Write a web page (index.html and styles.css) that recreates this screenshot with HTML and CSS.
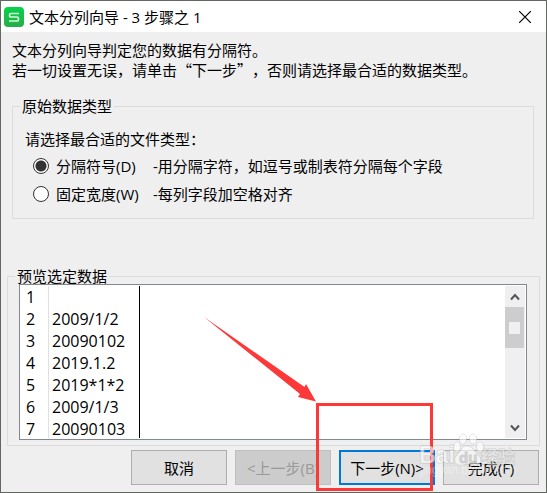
FILE: index.html
```html
<!DOCTYPE html>
<html lang="zh-CN">
<head>
<meta charset="utf-8">
<title>文本分列向导</title>
<link rel="stylesheet" href="styles.css">
</head>
<body>
<main class="dialog">
  <header class="titlebar">
    <svg class="logo" viewBox="0 0 20 20" aria-hidden="true">
      <defs><linearGradient id="g" x1="0" y1="0" x2="0" y2="1"><stop offset="0" stop-color="#05d34a"/><stop offset="1" stop-color="#27ad48"/></linearGradient></defs>
      <rect width="20" height="20" rx="4" fill="url(#g)"/>
      <path d="M15 6.500H7Q5.500 6.500 5.500 8Q5.500 10 7 10H13Q14.500 10 14.500 12Q14.500 14 13 14H5" fill="none" stroke="#d4f8dc" stroke-width="1.700"/>
    </svg>
    <h1 class="title">文本分列向导 - 3 步骤之 1</h1>
    <button class="close" type="button" aria-label="关闭">
      <svg viewBox="0 0 12 12" width="12" height="12"><path d="M0 0L12 12M12 0L0 12" stroke="#000" stroke-width="1.200"/></svg>
    </button>
  </header>

  <div class="intro">
    <p>文本分列向导判定您的数据有分隔符。</p>
    <p>若一切设置无误，请单击“下一步”，否则请选择最合适的数据类型。</p>
  </div>

  <fieldset class="group source">
    <legend>原始数据类型</legend>
    <p class="prompt">请选择最合适的文件类型：</p>
    <label class="option"><input type="radio" name="kind" checked><span>分隔符号(D)</span><span>-用分隔字符，如逗号或制表符分隔每个字段</span></label>
    <label class="option"><input type="radio" name="kind"><span>固定宽度(W)</span><span>-每列字段加空格对齐</span></label>
  </fieldset>

  <fieldset class="group preview">
    <legend>预览选定数据</legend>
    <div class="list">
      <div class="rows">
        <table>
          <tbody>
            <tr><th scope="row">1</th><td></td></tr>
            <tr><th scope="row">2</th><td>2009/1/2</td></tr>
            <tr><th scope="row">3</th><td>20090102</td></tr>
            <tr><th scope="row">4</th><td>2019.1.2</td></tr>
            <tr><th scope="row">5</th><td>2019*1*2</td></tr>
            <tr><th scope="row">6</th><td>2009/1/3</td></tr>
            <tr><th scope="row">7</th><td>20090103</td></tr>
          </tbody>
        </table>
      </div>
      <div class="scrollbar">
        <button class="arrow" type="button" aria-label="向上滚动"><svg viewBox="0 0 10 8" width="10" height="8"><path d="M1 6.500L5 2L9 6.500" fill="none" stroke="#555" stroke-width="2"/></svg></button>
        <div class="thumb"><span class="grip"></span></div>
        <button class="arrow down" type="button" aria-label="向下滚动"><svg viewBox="0 0 10 8" width="10" height="8"><path d="M1 1.500L5 6L9 1.500" fill="none" stroke="#555" stroke-width="2"/></svg></button>
      </div>
    </div>
  </fieldset>

  <footer class="actions">
    <button class="btn" type="button">取消</button>
    <button class="btn" type="button" disabled>&lt;上一步(B)</button>
    <button class="btn primary" type="button">下一步(N)&gt;</button>
    <button class="btn" type="button">完成(F)</button>
    <svg class="callout" viewBox="0 0 346 180" width="346" height="180" aria-hidden="true">
      <path d="M4 5L104.500 75L106 72L116 89.500L98 85L100 82Z" fill="#fd3838"/>
      <rect x="117.500" y="92.500" width="114" height="85" fill="none" stroke="#fd3838" stroke-width="3"/>
    </svg>
    <svg class="watermark" viewBox="0 0 100 50" width="100" height="50" aria-hidden="true">
      <g class="mark">
        <text class="brand" x="-1" y="31">Bai</text>
        <ellipse cx="37" cy="15" rx="3.500" ry="5"/>
        <ellipse cx="43" cy="7" rx="3.500" ry="5"/>
        <ellipse cx="53" cy="7" rx="3.500" ry="5"/>
        <ellipse cx="60" cy="15" rx="3.500" ry="5"/>
        <path d="M47 14C41 14 41 20 37 23C32 28 36 34 42 33Q48 31 54 33C61 34 63 27 58 23C54 20 53 14 47 14Z"/>
        <text class="du" x="39" y="31">du</text>
        <text class="cn" x="61" y="31">经验</text>
        <text class="url" x="0" y="42">jingyan.baidu.com</text>
      </g>
    </svg>
  </footer>
</main>
</body>
</html>
```
FILE: styles.css
```css
* { box-sizing: border-box; }

body {
  margin: 0;
  background: #efefef;
  color: #000;
  font: 15px/20px "Open Sans", "Noto Sans CJK SC", sans-serif;
}

p, h1 { margin: 0; }

button, input { font: inherit; color: inherit; }

.dialog {
  min-height: 100vh;
  border: 1px solid #626762;
  background: #efefef;
}

.titlebar {
  display: flex;
  align-items: center;
  height: 31px;
  padding: 0 15px 0 3px;
  background: #fff;
}

.logo { width: 20px; height: 20px; }

.title {
  flex: 1;
  margin-left: 5px;
  font-size: 15px;
  font-weight: 400;
}

.close {
  display: flex;
  padding: 0;
  border: 0;
  background: none;
}

.intro {
  padding: 8px 11px 0;
  font-family: "Noto Sans CJK SC", sans-serif;
  text-spacing-trim: space-all;
}

.group {
  min-width: 0;
  border: 1px solid #dcdcdc;
}

.group legend {
  padding: 0 2px;
  line-height: 16px;
}

.source {
  margin: 18px 12px 0 11px;
  padding: 15px 12px 10px 7px;
}

.prompt { padding: 0 5px 3px; }

.option {
  display: grid;
  grid-template-columns: 23px 97px 1fr;
  align-items: center;
  height: 28px;
  padding-left: 13px;
}

.option input {
  appearance: none;
  width: 16px;
  height: 16px;
  margin: 0;
  border: 1px solid #333;
  border-radius: 50%;
  background: #fff;
}

.option input:checked {
  background: radial-gradient(circle, #333 0 5px, #fff 6px);
}

.preview {
  margin: 49px 6px 0;
  padding: 0 12px 5px 7px;
}

.list {
  display: flex;
  height: 156px;
  margin-left: 4px;
  padding: 1px 1px 1px 0;
  border: 1px solid #828790;
  background: #fff;
}

.rows { flex: 1; overflow: hidden; }

table {
  border-collapse: separate;
  border-spacing: 0;
  font-size: 16px;
  line-height: 22px;
}

th, td { height: 22px; padding: 0; text-align: left; font-weight: 400; }

th { width: 29px; padding-left: 6px; border-right: 1px solid #e0e0e0; }

td { width: 91px; padding-left: 3px; border-right: 1px solid #000; }

.scrollbar {
  display: flex;
  flex-direction: column;
  width: 20px;
  background: #efefef;
}

.arrow {
  display: flex;
  align-items: center;
  justify-content: center;
  height: 21px;
  padding: 0;
  border: 0;
  background: none;
}

.down { margin-top: auto; }

.thumb {
  display: flex;
  align-items: center;
  justify-content: center;
  width: 19px;
  height: 41px;
  background: #cdcdcd;
}

.grip { width: 11px; height: 12px; background: #f0f0f0; }

.actions {
  position: relative;
  display: flex;
  justify-content: flex-end;
  gap: 8px;
  padding: 4px 7px 7px;
}

.btn {
  width: 96px;
  height: 35px;
  padding: 0;
  border: 1px solid #adadad;
  background: #e1e1e1;
  white-space: nowrap;
}

.btn:disabled { border-color: #bfbfbf; background: #ccc; color: #999; }

.primary { border: 2px solid #0078d7; }

.callout {
  position: absolute;
  right: 0;
  bottom: 0;
  pointer-events: none;
}

.watermark {
  position: absolute;
  right: 26px;
  bottom: 10px;
  overflow: visible;
  pointer-events: none;
}

.mark {
  fill: #fff;
  fill-opacity: 0.6;
  stroke: #a0a0a0;
  stroke-opacity: 0.4;
  stroke-width: 1px;
  paint-order: stroke;
}

.brand { font: bold 23px "Liberation Sans", sans-serif; }

.du { font: bold 15px "Liberation Sans", sans-serif; fill: #c4c4c4; }

.cn { font: bold 17px "Noto Sans CJK SC", sans-serif; fill-opacity: 0.4; }

.url { font: 12px "Liberation Sans", sans-serif; fill-opacity: 0.4; stroke: none; }
```
